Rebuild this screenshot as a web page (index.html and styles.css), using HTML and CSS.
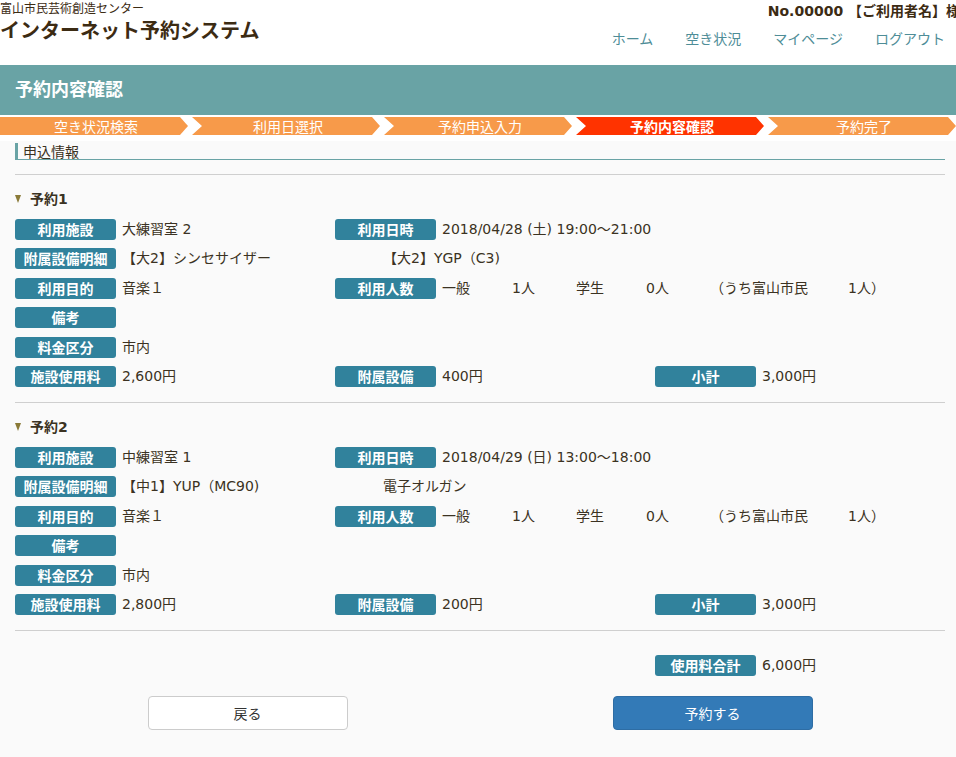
FILE: index.html
```html
<!DOCTYPE html>
<html lang="ja">
<head>
<meta charset="utf-8">
<title>予約内容確認</title>
<link rel="stylesheet" href="styles.css">
</head>
<body>
<header class="site-header">
  <div class="brand">
    <div class="org">富山市民芸術創造センター</div>
    <div class="sys">インターネット予約システム</div>
  </div>
  <div class="head-right">
    <div class="user">No.00000 【ご利用者名】様</div>
    <nav class="gnav">
      <a href="#">ホーム</a>
      <a href="#">空き状況</a>
      <a href="#">マイページ</a>
      <a href="#">ログアウト</a>
    </nav>
  </div>
</header>

<div class="page-title">予約内容確認</div>

<div class="steps-wrap">
  <ol class="steps">
    <li class="step first">空き状況検索</li>
    <li class="step">利用日選択</li>
    <li class="step">予約申込入力</li>
    <li class="step active">予約内容確認</li>
    <li class="step">予約完了</li>
  </ol>
</div>

<main class="content">
  <h2 class="info-head">申込情報</h2>
  <hr class="sep">

  <section class="rsv">
    <h3 class="rsv-title"><span class="tri"></span>予約1</h3>
    <div class="rows">
      <div class="row">
        <div class="cell"><span class="lbl">利用施設</span><span class="val">大練習室 2</span></div>
        <div class="cell span2"><span class="lbl">利用日時</span><span class="val">2018/04/28 (土) 19:00～21:00</span></div>
      </div>
      <div class="row">
        <div class="cell span3"><span class="lbl">附属設備明細</span>
          <span class="val equip"><span class="eq">【大2】シンセサイザー</span><span class="eq">【大2】YGP（C3)</span></span>
        </div>
      </div>
      <div class="row">
        <div class="cell"><span class="lbl">利用目的</span><span class="val">音楽１</span></div>
        <div class="cell span2"><span class="lbl">利用人数</span>
          <span class="val people"><span class="pk">一般</span><span class="pn">1人</span><span class="pk">学生</span><span class="pn">0人</span><span class="pc">（うち富山市民</span><span>1人）</span></span>
        </div>
      </div>
      <div class="row">
        <div class="cell"><span class="lbl">備考</span><span class="val"></span></div>
      </div>
      <div class="row">
        <div class="cell"><span class="lbl">料金区分</span><span class="val">市内</span></div>
      </div>
      <div class="row">
        <div class="cell"><span class="lbl">施設使用料</span><span class="val">2,600円</span></div>
        <div class="cell"><span class="lbl">附属設備</span><span class="val">400円</span></div>
        <div class="cell"><span class="lbl">小計</span><span class="val">3,000円</span></div>
      </div>
    </div>
  </section>
  <hr class="sep after-rsv">

  <section class="rsv">
    <h3 class="rsv-title"><span class="tri"></span>予約2</h3>
    <div class="rows">
      <div class="row">
        <div class="cell"><span class="lbl">利用施設</span><span class="val">中練習室 1</span></div>
        <div class="cell span2"><span class="lbl">利用日時</span><span class="val">2018/04/29 (日) 13:00～18:00</span></div>
      </div>
      <div class="row">
        <div class="cell span3"><span class="lbl">附属設備明細</span>
          <span class="val equip"><span class="eq">【中1】YUP（MC90)</span><span class="eq">電子オルガン</span></span>
        </div>
      </div>
      <div class="row">
        <div class="cell"><span class="lbl">利用目的</span><span class="val">音楽１</span></div>
        <div class="cell span2"><span class="lbl">利用人数</span>
          <span class="val people"><span class="pk">一般</span><span class="pn">1人</span><span class="pk">学生</span><span class="pn">0人</span><span class="pc">（うち富山市民</span><span>1人）</span></span>
        </div>
      </div>
      <div class="row">
        <div class="cell"><span class="lbl">備考</span><span class="val"></span></div>
      </div>
      <div class="row">
        <div class="cell"><span class="lbl">料金区分</span><span class="val">市内</span></div>
      </div>
      <div class="row">
        <div class="cell"><span class="lbl">施設使用料</span><span class="val">2,800円</span></div>
        <div class="cell"><span class="lbl">附属設備</span><span class="val">200円</span></div>
        <div class="cell"><span class="lbl">小計</span><span class="val">3,000円</span></div>
      </div>
    </div>
  </section>
  <hr class="sep after-rsv">

  <div class="row total">
    <div class="cell col3"><span class="lbl">使用料合計</span><span class="val">6,000円</span></div>
  </div>

  <div class="actions">
    <button class="btn btn-back" type="button">戻る</button>
    <button class="btn btn-primary" type="button">予約する</button>
  </div>
</main>
</body>
</html>
```

FILE: styles.css
```css
html, body {
  margin: 0;
  padding: 0;
}
body {
  background: #fafafa;
  color: #3b3222;
  font-family: "DejaVu Sans", "Noto Sans CJK JP", sans-serif;
  font-size: 14px;
  overflow: hidden;
}

/* header */
.site-header {
  background: #fff;
  height: 65px;
  display: flex;
  justify-content: space-between;
  padding-right: 11px;
  overflow: hidden;
}
.org {
  font-family: "Noto Sans CJK JP", sans-serif;
  font-size: 12px;
  line-height: 15px;
  color: #3c2b13;
}
.sys {
  margin-top: 3px;
  font-family: "Noto Sans CJK JP", sans-serif;
  font-size: 20px;
  font-weight: bold;
  line-height: 24px;
  color: #3c2b13;
}
.head-right {
  display: flex;
  flex-direction: column;
  align-items: flex-end;
}
.user {
  margin-top: 1px;
  margin-right: -15px;
  font-weight: bold;
  line-height: 20px;
  white-space: nowrap;
  color: #3c2b13;
}
.gnav {
  margin-top: 7px;
  display: flex;
  gap: 32px;
  line-height: 20px;
}
.gnav a {
  color: #4e8d97;
  text-decoration: none;
  font-family: "Noto Sans CJK JP", sans-serif;
}

/* title bar */
.page-title {
  background: #69a3a5;
  color: #fff;
  height: 50px;
  line-height: 47px;
  padding-left: 15px;
  font-family: "Noto Sans CJK JP", sans-serif;
  font-size: 18px;
  font-weight: bold;
}

/* steps */
.steps-wrap {
  background: #fff;
  padding: 2px 0 6px;
  overflow: hidden;
}
.steps {
  list-style: none;
  margin: 0;
  padding: 0;
  display: flex;
  height: 18px;
}
.step {
  flex: 0 0 192px;
  height: 18px;
  line-height: 18px;
  text-align: center;
  color: #fff;
  background: #f79a4a;
  font-family: "Noto Sans CJK JP", sans-serif;
  font-size: 14px;
  clip-path: polygon(0 0, calc(100% - 12px) 0, calc(100% - 4px) 50%, calc(100% - 12px) 100%, 0 100%, 10px 50%);
}
.step.first {
  clip-path: polygon(0 0, calc(100% - 12px) 0, calc(100% - 4px) 50%, calc(100% - 12px) 100%, 0 100%);
}
.step.active {
  background: #ff3300;
  font-weight: bold;
}

/* content */
.content {
  padding: 1px 11px 40px 15px;
}
.info-head {
  margin: 1px 0 0;
  padding-left: 5px;
  border-left: 3px solid #69a3a5;
  border-bottom: 1px solid #69a3a5;
  font-size: 14px;
  font-weight: normal;
  line-height: 16px;
  font-family: "Noto Sans CJK JP", sans-serif;
  color: #3b3222;
}
.sep {
  margin: 14px 0 0;
  border: 0;
  border-top: 1px solid #cfcfcf;
  height: 0;
}
.sep.after-rsv {
  margin-top: 15px;
}
.rsv-title {
  margin: 14px 0 0;
  font-size: 14px;
  line-height: 20px;
  font-weight: bold;
  display: flex;
  align-items: center;
  color: #3b3222;
}
.tri {
  width: 0;
  height: 0;
  border-left: 3.5px solid transparent;
  border-right: 3.5px solid transparent;
  border-top: 8px solid #8a7a38;
  margin-right: 9px;
}
.rows {
  margin-top: 10px;
  display: flex;
  flex-direction: column;
  gap: 8.4px;
}
.row {
  display: grid;
  grid-template-columns: 320px 320px 1fr;
  height: 21px;
}
.cell {
  display: flex;
  align-items: center;
  white-space: nowrap;
}
.cell.span2 { grid-column: 2 / 4; }
.cell.span3 { grid-column: 1 / 4; }
.cell.col3 { grid-column: 3; }
.lbl {
  flex: 0 0 101px;
  height: 21px;
  line-height: 21px;
  background: #31829c;
  color: #fff;
  font-weight: bold;
  text-align: center;
  border-radius: 3px;
  font-family: "Noto Sans CJK JP", sans-serif;
}
.val {
  margin-left: 6px;
  line-height: 21px;
}
.equip {
  display: flex;
}
.eq {
  width: 261px;
}
.people {
  display: flex;
}
.pk { width: 70px; }
.pn { width: 64px; }
.pc { width: 138px; }

.total {
  margin-top: 24px;
}
.actions {
  margin-top: 20px;
  display: grid;
  grid-template-columns: 1fr 1fr;
  justify-items: center;
}
.btn {
  width: 200px;
  height: 34px;
  border-radius: 4px;
  font-family: "Noto Sans CJK JP", sans-serif;
  font-size: 14px;
  cursor: pointer;
}
.btn-back {
  background: #fff;
  border: 1px solid #ccc;
  color: #333;
}
.btn-primary {
  background: #337ab7;
  border: 1px solid #2e6da4;
  color: #fff;
}
```
